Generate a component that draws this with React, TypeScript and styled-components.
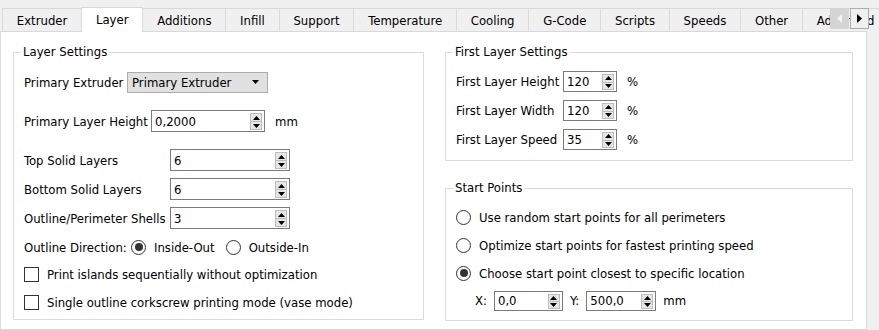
import React from 'react';
import styled, { createGlobalStyle } from 'styled-components';

const Global = createGlobalStyle`
  html, body { margin: 0; padding: 0; background: #f0f0f0; }
  body {
    font-family: "DejaVu Sans Condensed", "DejaVu Sans", sans-serif;
    font-stretch: condensed;
    font-size: 13px;
    color: #000;
  }
`;

const Window = styled.div`
  position: relative;
  width: 879px;
  height: 330px;
  overflow: hidden;
  background: #f0f0f0;
`;

const TabBar = styled.div`
  position: relative;
  height: 32px;
  display: flex;
  align-items: flex-end;
  padding-left: 3px;
  overflow: hidden;
  &::after {
    content: '';
    position: absolute;
    left: 0;
    bottom: 0;
    width: 867px;
    height: 1px;
    background: #d9d9d9;
  }
`;

const Tab = styled.div<{ $active?: boolean }>`
  position: relative;
  z-index: ${p => (p.$active ? 2 : 1)};
  flex: none;
  box-sizing: border-box;
  height: ${p => (p.$active ? 25 : 23)}px;
  margin-bottom: ${p => (p.$active ? 0 : 1)}px;
  margin-left: -1px;
  padding: 0 13.8px ${p => (p.$active ? 1 : 0)}px;
  display: flex;
  align-items: center;
  justify-content: center;
  border: 1px solid #d9d9d9;
  border-bottom: none;
  background: ${p => (p.$active ? '#fff' : '#f0f0f0')};
  white-space: nowrap;
`;

const Scroller = styled.div`
  position: absolute;
  top: 8px;
  left: 830px;
  z-index: 3;
  display: flex;
  gap: 1px;
`;

const ScrollBtn = styled.div<{ $disabled?: boolean }>`
  width: 19px;
  height: 21px;
  box-sizing: border-box;
  display: flex;
  align-items: center;
  justify-content: center;
  background: ${p => (p.$disabled ? '#d4d4d4' : '#f0f0f0')};
  border: 1px solid ${p => (p.$disabled ? '#d4d4d4' : '#adadad')};
`;

const Pane = styled.div`
  box-sizing: border-box;
  width: 867px;
  height: 298px;
  background: #fff;
  border: 1px solid #d9d9d9;
  border-top: none;
  padding: 12px 13px 0 12px;
  display: grid;
  grid-template-columns: 411px 408px;
  column-gap: 21px;
  align-items: start;
`;

const Column = styled.div`
  display: flex;
  flex-direction: column;
  gap: 19px;
`;

const Group = styled.fieldset<{ $pt: number; $pb: number }>`
  margin: 0;
  min-width: 0;
  border: 1px solid #dcdcdc;
  padding: ${p => p.$pt}px 10px ${p => p.$pb}px 10px;
  display: flex;
  flex-direction: column;
`;

const Legend = styled.legend`
  padding: 0 2px;
  margin-left: -3px;
  line-height: 16px;
`;

const Stack = styled.div<{ $gap: number }>`
  display: flex;
  flex-direction: column;
  gap: ${p => p.$gap}px;
`;

const Row = styled.div<{ $h?: number; $indent?: number; $gap?: number }>`
  display: flex;
  align-items: center;
  height: ${p => p.$h ?? 22}px;
  padding-left: ${p => p.$indent ?? 0}px;
  gap: ${p => p.$gap ?? 0}px;
  white-space: nowrap;
`;

const Label = styled.span<{ $w?: number }>`
  flex: none;
  width: ${p => (p.$w ? `${p.$w}px` : 'auto')};
`;

const Unit = styled.span`
  margin-left: 10px;
`;

const SpinFrame = styled.div<{ $w: number; $h: number }>`
  flex: none;
  box-sizing: border-box;
  width: ${p => p.$w}px;
  height: ${p => p.$h}px;
  border: 1px solid #7a7a7a;
  background: #fff;
  display: flex;
  align-items: stretch;
`;

const SpinValue = styled.span`
  flex: 1;
  padding-left: 3px;
  display: flex;
  align-items: center;
`;

const SpinButtons = styled.div`
  width: 12px;
  margin: 2px 2px 1px 0;
  display: flex;
  flex-direction: column;
`;

const SpinBtn = styled.div`
  flex: 1;
  box-sizing: border-box;
  background: #e6e6e6;
  border: 1px solid #bdbdbd;
  display: flex;
  align-items: center;
  justify-content: center;
  & + & { border-top: none; }
`;

const Combo = styled.div`
  flex: none;
  box-sizing: border-box;
  width: 141px;
  height: 21px;
  background: #e1e1e1;
  border: 1px solid #adadad;
  display: flex;
  align-items: center;
  justify-content: space-between;
  padding: 0 8px 0 4px;
`;

const RadioDot = styled.span<{ $checked?: boolean }>`
  flex: none;
  box-sizing: border-box;
  width: 15px;
  height: 15px;
  border-radius: 50%;
  border: 1px solid #333;
  background: #fff;
  display: flex;
  align-items: center;
  justify-content: center;
  &::after {
    content: '';
    display: ${p => (p.$checked ? 'block' : 'none')};
    width: 8px;
    height: 8px;
    border-radius: 50%;
    background: #333;
  }
`;

const CheckBox = styled.span`
  flex: none;
  box-sizing: border-box;
  width: 15px;
  height: 15px;
  border: 1px solid #333;
  background: #fff;
`;

const Option = styled.span`
  display: inline-flex;
  align-items: center;
  gap: 8px;
`;

const Up = () => (
  <svg width="7" height="4" viewBox="0 0 7 4"><path d="M0 4 L3.5 0 L7 4 Z" fill="#000" /></svg>
);
const Down = () => (
  <svg width="7" height="4" viewBox="0 0 7 4"><path d="M0 0 L3.5 4 L7 0 Z" fill="#000" /></svg>
);

const Spin = ({ value, w, h = 22 }: { value: string; w: number; h?: number }) => (
  <SpinFrame $w={w} $h={h}>
    <SpinValue>{value}</SpinValue>
    <SpinButtons>
      <SpinBtn><Up /></SpinBtn>
      <SpinBtn><Down /></SpinBtn>
    </SpinButtons>
  </SpinFrame>
);

const tabs = ['Extruder', 'Layer', 'Additions', 'Infill', 'Support', 'Temperature', 'Cooling', 'G-Code', 'Scripts', 'Speeds', 'Other', 'Advanced'];

export default function App() {
  return (
    <Window>
      <Global />
      <TabBar>
        {tabs.map(t => (
          <Tab key={t} $active={t === 'Layer'}>{t}</Tab>
        ))}
      </TabBar>
      <Scroller>
        <ScrollBtn $disabled>
          <svg width="5" height="9" viewBox="0 0 5 9"><path d="M5 0 L0 4.5 L5 9 Z" fill="#f2f2f2" /></svg>
        </ScrollBtn>
        <ScrollBtn>
          <svg width="5" height="9" viewBox="0 0 5 9"><path d="M0 0 L5 4.5 L0 9 Z" fill="#000" /></svg>
        </ScrollBtn>
      </Scroller>
      <Pane>
        <Group $pt={11} $pb={6}>
          <Legend>Layer Settings</Legend>
          <Stack $gap={17}>
            <Row>
              <Label $w={103}>Primary Extruder</Label>
              <Combo>
                <span>Primary Extruder</span>
                <svg width="7" height="4" viewBox="0 0 7 4"><path d="M0 0 L3.5 4 L7 0 Z" fill="#000" /></svg>
              </Combo>
            </Row>
            <Row>
              <Label $w={127}>Primary Layer Height</Label>
              <Spin value="0,2000" w={114} />
              <Unit>mm</Unit>
            </Row>
            <Stack $gap={7}>
              <Row>
                <Label $w={146}>Top Solid Layers</Label>
                <Spin value="6" w={120} />
              </Row>
              <Row>
                <Label $w={146}>Bottom Solid Layers</Label>
                <Spin value="6" w={120} />
              </Row>
              <Row>
                <Label $w={146}>Outline/Perimeter Shells</Label>
                <Spin value="3" w={120} />
              </Row>
              <Stack $gap={5.5}>
                <Row $gap={11}>
                  <Label $w={96}>Outline Direction:</Label>
                  <Option><RadioDot $checked />Inside-Out</Option>
                  <Option><RadioDot />Outside-In</Option>
                </Row>
                <Row>
                  <Option><CheckBox />Print islands sequentially without optimization</Option>
                </Row>
                <Row>
                  <Option><CheckBox />Single outline corkscrew printing mode (vase mode)</Option>
                </Row>
              </Stack>
            </Stack>
          </Stack>
        </Group>
        <Column>
          <Group $pt={11} $pb={10}>
            <Legend>First Layer Settings</Legend>
            <Stack $gap={8}>
              <Row $h={21}>
                <Label $w={107}>First Layer Height</Label>
                <Spin value="120" w={54} h={21} />
                <Unit>%</Unit>
              </Row>
              <Row $h={21}>
                <Label $w={107}>First Layer Width</Label>
                <Spin value="120" w={54} h={21} />
                <Unit>%</Unit>
              </Row>
              <Row $h={21}>
                <Label $w={107}>First Layer Speed</Label>
                <Spin value="35" w={54} h={21} />
                <Unit>%</Unit>
              </Row>
            </Stack>
          </Group>
          <Group $pt={10} $pb={9}>
            <Legend>Start Points</Legend>
            <Stack $gap={6}>
              <Row><Option><RadioDot />Use random start points for all perimeters</Option></Row>
              <Row><Option><RadioDot />Optimize start points for fastest printing speed</Option></Row>
              <Row><Option><RadioDot $checked />Choose start point closest to specific location</Option></Row>
              <Row $h={21} $indent={19} $gap={7}>
                <Label>X:</Label>
                <Spin value="0,0" w={69} h={20} />
                <Label>Y:</Label>
                <Spin value="500,0" w={70} h={20} />
                <Label>mm</Label>
              </Row>
            </Stack>
          </Group>
        </Column>
      </Pane>
    </Window>
  );
}
